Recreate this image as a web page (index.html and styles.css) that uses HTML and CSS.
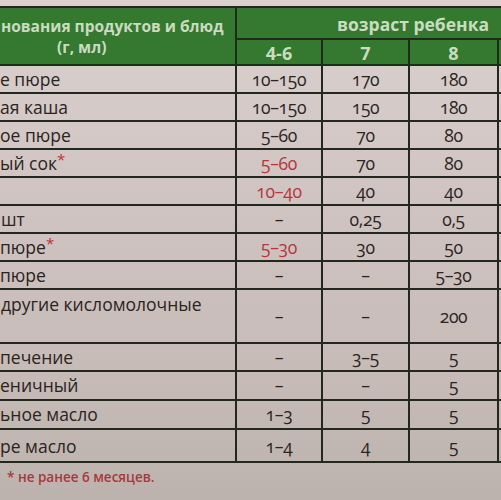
FILE: index.html
```html
<!DOCTYPE html>
<html lang="ru">
<head>
<meta charset="utf-8">
<link rel="stylesheet" href="styles.css">
</head>
<body>
<div class="sheet">
  <table class="menu">
    <colgroup>
      <col class="c-name"><col class="c-age"><col class="c-age2"><col class="c-age3"><col class="c-more">
    </colgroup>
    <thead>
      <tr class="h1">
        <th rowspan="2" class="hname">
          <span class="hl1">нования продуктов и блюд</span>
          <span class="hl2">(г, мл)</span>
        </th>
        <th colspan="4" class="hage"><span class="hage-t">возраст ребенка</span></th>
      </tr>
      <tr class="h2">
        <th>4-6</th><th>7</th><th>8</th><th></th>
      </tr>
    </thead>
    <tbody>
      <tr><td class="n">е пюре</td><td>10–150</td><td>170</td><td>180</td><td></td></tr>
      <tr><td class="n">ая каша</td><td>10–150</td><td>150</td><td>180</td><td></td></tr>
      <tr><td class="n">ое пюре</td><td>5–60</td><td>70</td><td>80</td><td></td></tr>
      <tr><td class="n">ый сок<span class="ast">*</span></td><td class="red">5–60</td><td>70</td><td>80</td><td></td></tr>
      <tr><td class="n"></td><td class="red">10–40</td><td>40</td><td>40</td><td></td></tr>
      <tr><td class="n ind">шт</td><td>–</td><td>0,25</td><td>0,5</td><td></td></tr>
      <tr><td class="n">пюре<span class="ast">*</span></td><td class="red">5–30</td><td>30</td><td>50</td><td></td></tr>
      <tr><td class="n">пюре</td><td>–</td><td>–</td><td>5–30</td><td></td></tr>
      <tr class="tall"><td class="n top ind">другие кисломолочные</td><td>–</td><td>–</td><td>200</td><td></td></tr>
      <tr><td class="n">печение</td><td>–</td><td>3–5</td><td>5</td><td></td></tr>
      <tr class="r29"><td class="n">еничный</td><td>–</td><td>–</td><td>5</td><td></td></tr>
      <tr class="r30"><td class="n">ьное масло</td><td>1–3</td><td>5</td><td>5</td><td></td></tr>
      <tr class="r34"><td class="n">ре масло</td><td>1–4</td><td>4</td><td>5</td><td></td></tr>
    </tbody>
  </table>
  <p class="note">* не ранее 6 месяцев.</p>
</div>
</body>
</html>
```

FILE: styles.css
```css
html, body {
  margin: 0;
  padding: 0;
}
body {
  width: 501px;
  height: 500px;
  overflow: hidden;
  background: linear-gradient(180deg, #dad1cf 0%, #d0c4c2 40%, #c6bbb7 75%, #bdb3ae 100%);
  font-family: "Open Sans", "Noto Sans", sans-serif;
  color: #2a2421;
}
.sheet {
  padding-top: 6px;
}
.menu {
  border-collapse: collapse;
  table-layout: fixed;
  width: 560px;
}
.c-name { width: 236px; }
.c-age { width: 86px; }
.c-age2 { width: 87px; }
.c-age3 { width: 89px; }
.c-more { width: 62px; }

.menu th {
  background: #34792f;
  color: #cadcc0;
  font-weight: 700;
  font-size: 16px;
  border: 2px solid #1f2b1b;
  padding: 0;
  white-space: nowrap;
}
.menu th.hname {
  border-left: none;
  vertical-align: top;
  text-align: left;
  padding: 8px 0 0 0;
  line-height: 21px;
}
.hl1 {
  display: block;
  padding-left: 1px;
  font-size: 15.5px;
}
.hl2 {
  display: block;
  padding-left: 57px;
  font-size: 15.5px;
}
.h1 { height: 32px; }
.menu th.hage {
  text-align: left;
  padding-top: 2px;
  line-height: 22px;
}
.hage-t {
  display: block;
  padding-left: 100px;
  font-size: 17.5px;
}
.h2 { height: 26px; }
.menu .h2 th {
  font-size: 18px;
  line-height: 22px;
  padding-top: 2px;
}

.menu td {
  border: 2px solid #22281e;
  height: 26px;
  padding: 0;
  text-align: center;
  font-size: 17.5px;
  letter-spacing: -0.3px;
  line-height: 22px;
  font-variant-numeric: oldstyle-nums;
  color: #2b2522;
}
.menu td.n {
  border-left: none;
  text-align: left;
  font-size: 17.5px;
  letter-spacing: 0;
  padding-left: 0;
  color: #2a2421;
}
.menu td.ind {
  padding-left: 1px;
}
.menu td.top {
  vertical-align: top;
  padding-top: 3px;
}
.menu td.red {
  color: #b5373b;
}
.ast {
  color: #c0333a;
  vertical-align: 5px;
  font-size: 15px;
  line-height: 0;
}
.menu tr.tall td { height: 49px; }
.menu tr.r29 td { height: 26.5px; }
.menu tr.r30 td { height: 27.5px; }
.menu tr.r34 td { height: 31px; }

.note {
  margin: 5px 0 0 7px;
  font-size: 13.5px;
  color: #a8393a;
  font-weight: 600;
}
```
